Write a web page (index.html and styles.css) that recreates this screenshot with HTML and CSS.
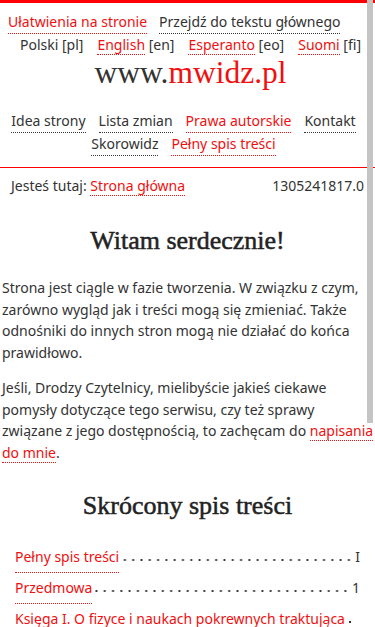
FILE: index.html
```html
<!DOCTYPE html>
<html lang="pl">
<head>
    <meta charset="UTF-8" />
    <title>www.mwidz.pl</title>
    <link rel="stylesheet" href="styles.css">
</head>
<body>

    <div class="naglowek">
        <div class="pomocnicze">
            <a class="czerwony" href="#">Ułatwienia na stronie</a>
            <a href="#">Przejdź do tekstu głównego</a>
        </div>

        <div class="jezyki">
            <span>Polski [pl]</span>
            <span><a class="czerwony" href="#">English</a> [en]</span>
            <span><a class="czerwony" href="#">Esperanto</a> [eo]</span>
            <span><a class="czerwony" href="#">Suomi</a> [fi]</span>
        </div>

        <h1 class="logo">www.<span class="czerwony">mwidz.pl</span></h1>

        <div class="menu">
            <a href="#">Idea strony</a>
            <a href="#">Lista zmian</a>
            <a class="czerwony" href="#">Prawa autorskie</a>
            <a href="#">Kontakt</a>
            <a href="#">Skorowidz</a>
            <a class="czerwony" href="#">Pełny spis treści</a>
        </div>
    </div>

    <div class="okruszki">
        <span>Jesteś tutaj: <a class="czerwony" href="#">Strona główna</a></span>
        <span>1305241817.0</span>
    </div>

    <div class="tresc">
        <h2>Witam serdecznie!</h2>

        <p>Strona jest ciągle w fazie tworzenia. W związku z czym, zarówno wygląd jak i treści mogą się zmieniać. Także odnośniki do innych stron mogą nie działać do końca prawidłowo.</p>

        <p>Jeśli, Drodzy Czytelnicy, mielibyście jakieś ciekawe pomysły dotyczące tego serwisu, czy też sprawy związane z jego dostępnością, to zachęcam do <a class="czerwony" href="#">napisania do mnie</a>.</p>

        <h2 class="spis-tytul">Skrócony spis treści</h2>

        <ul class="spis">
            <li><a class="czerwony" href="#">Pełny spis treści</a><span class="kropki"></span><span class="strona">I</span></li>
            <li><a class="czerwony" href="#">Przedmowa</a><span class="kropki"></span><span class="strona">1</span></li>
            <li><span class="czerwony">Księga I. O fizyce i naukach pokrewnych traktująca</span><span class="kropki"></span><span class="strona"></span></li>
        </ul>
    </div>

    <div class="pasek"></div>

</body>
</html>
```

FILE: styles.css
```css
body {
    font-family: "Noto Sans", sans-serif;
    font-size: 14px;
    color: #333;
    margin: 0;
    border-top: 3px solid #f00;
    background: #fff;
    overflow: hidden;
}

a {
    color: #333;
    text-decoration: none;
    border-bottom: 1px dotted #333;
}

.czerwony {
    color: #f01010;
}

a.czerwony {
    border-bottom-color: #f01010;
}

.naglowek {
    border-bottom: 1px solid #f00;
    padding-bottom: 11px;
}

.pomocnicze {
    display: flex;
    gap: 12px;
    padding: 8px 8px 0;
    line-height: 21.5px;
}

.jezyki {
    display: flex;
    justify-content: center;
    gap: 14px;
    padding-left: 6px;
    line-height: 21.5px;
}

.logo {
    font-family: "Liberation Serif", serif;
    font-weight: normal;
    font-size: 31.5px;
    text-align: center;
    margin: 0;
    line-height: 36px;
    padding-left: 6px;
}

.menu {
    display: flex;
    flex-wrap: wrap;
    justify-content: center;
    column-gap: 13px;
    line-height: 22px;
    padding: 19px 10px 0 2px;
}

.okruszki {
    display: flex;
    justify-content: space-between;
    padding: 7px 11px 0;
    line-height: 22px;
}

.tresc h2 {
    font-family: "Liberation Serif", serif;
    font-size: 26px;
    font-weight: normal;
    -webkit-text-stroke: 0.5px #222;
    color: #222;
    text-align: center;
    margin: 29px 0 21px;
    line-height: 30px;
}

.tresc p {
    margin: 0 0 0 2px;
    line-height: 21.5px;
}

.tresc p + p {
    margin-top: 14px;
}

.tresc h2.spis-tytul {
    margin: 28px 0 21px;
}

.spis {
    list-style: none;
    margin: 0;
    padding: 0 15px;
}

.spis li {
    display: flex;
    align-items: baseline;
    line-height: 30px;
    white-space: nowrap;
}

.kropki {
    flex: 1;
    height: 4px;
    margin: 0 2px;
    background-image: radial-gradient(circle, #333 0.9px, transparent 1.2px);
    background-size: 8.3px 4px;
    background-position: right bottom;
}

.strona {
    min-width: 4px;
    text-align: right;
}

.pasek {
    position: fixed;
    top: 0;
    right: 2px;
    width: 6px;
    height: 423px;
    background: #c4c4c4;
}
```
